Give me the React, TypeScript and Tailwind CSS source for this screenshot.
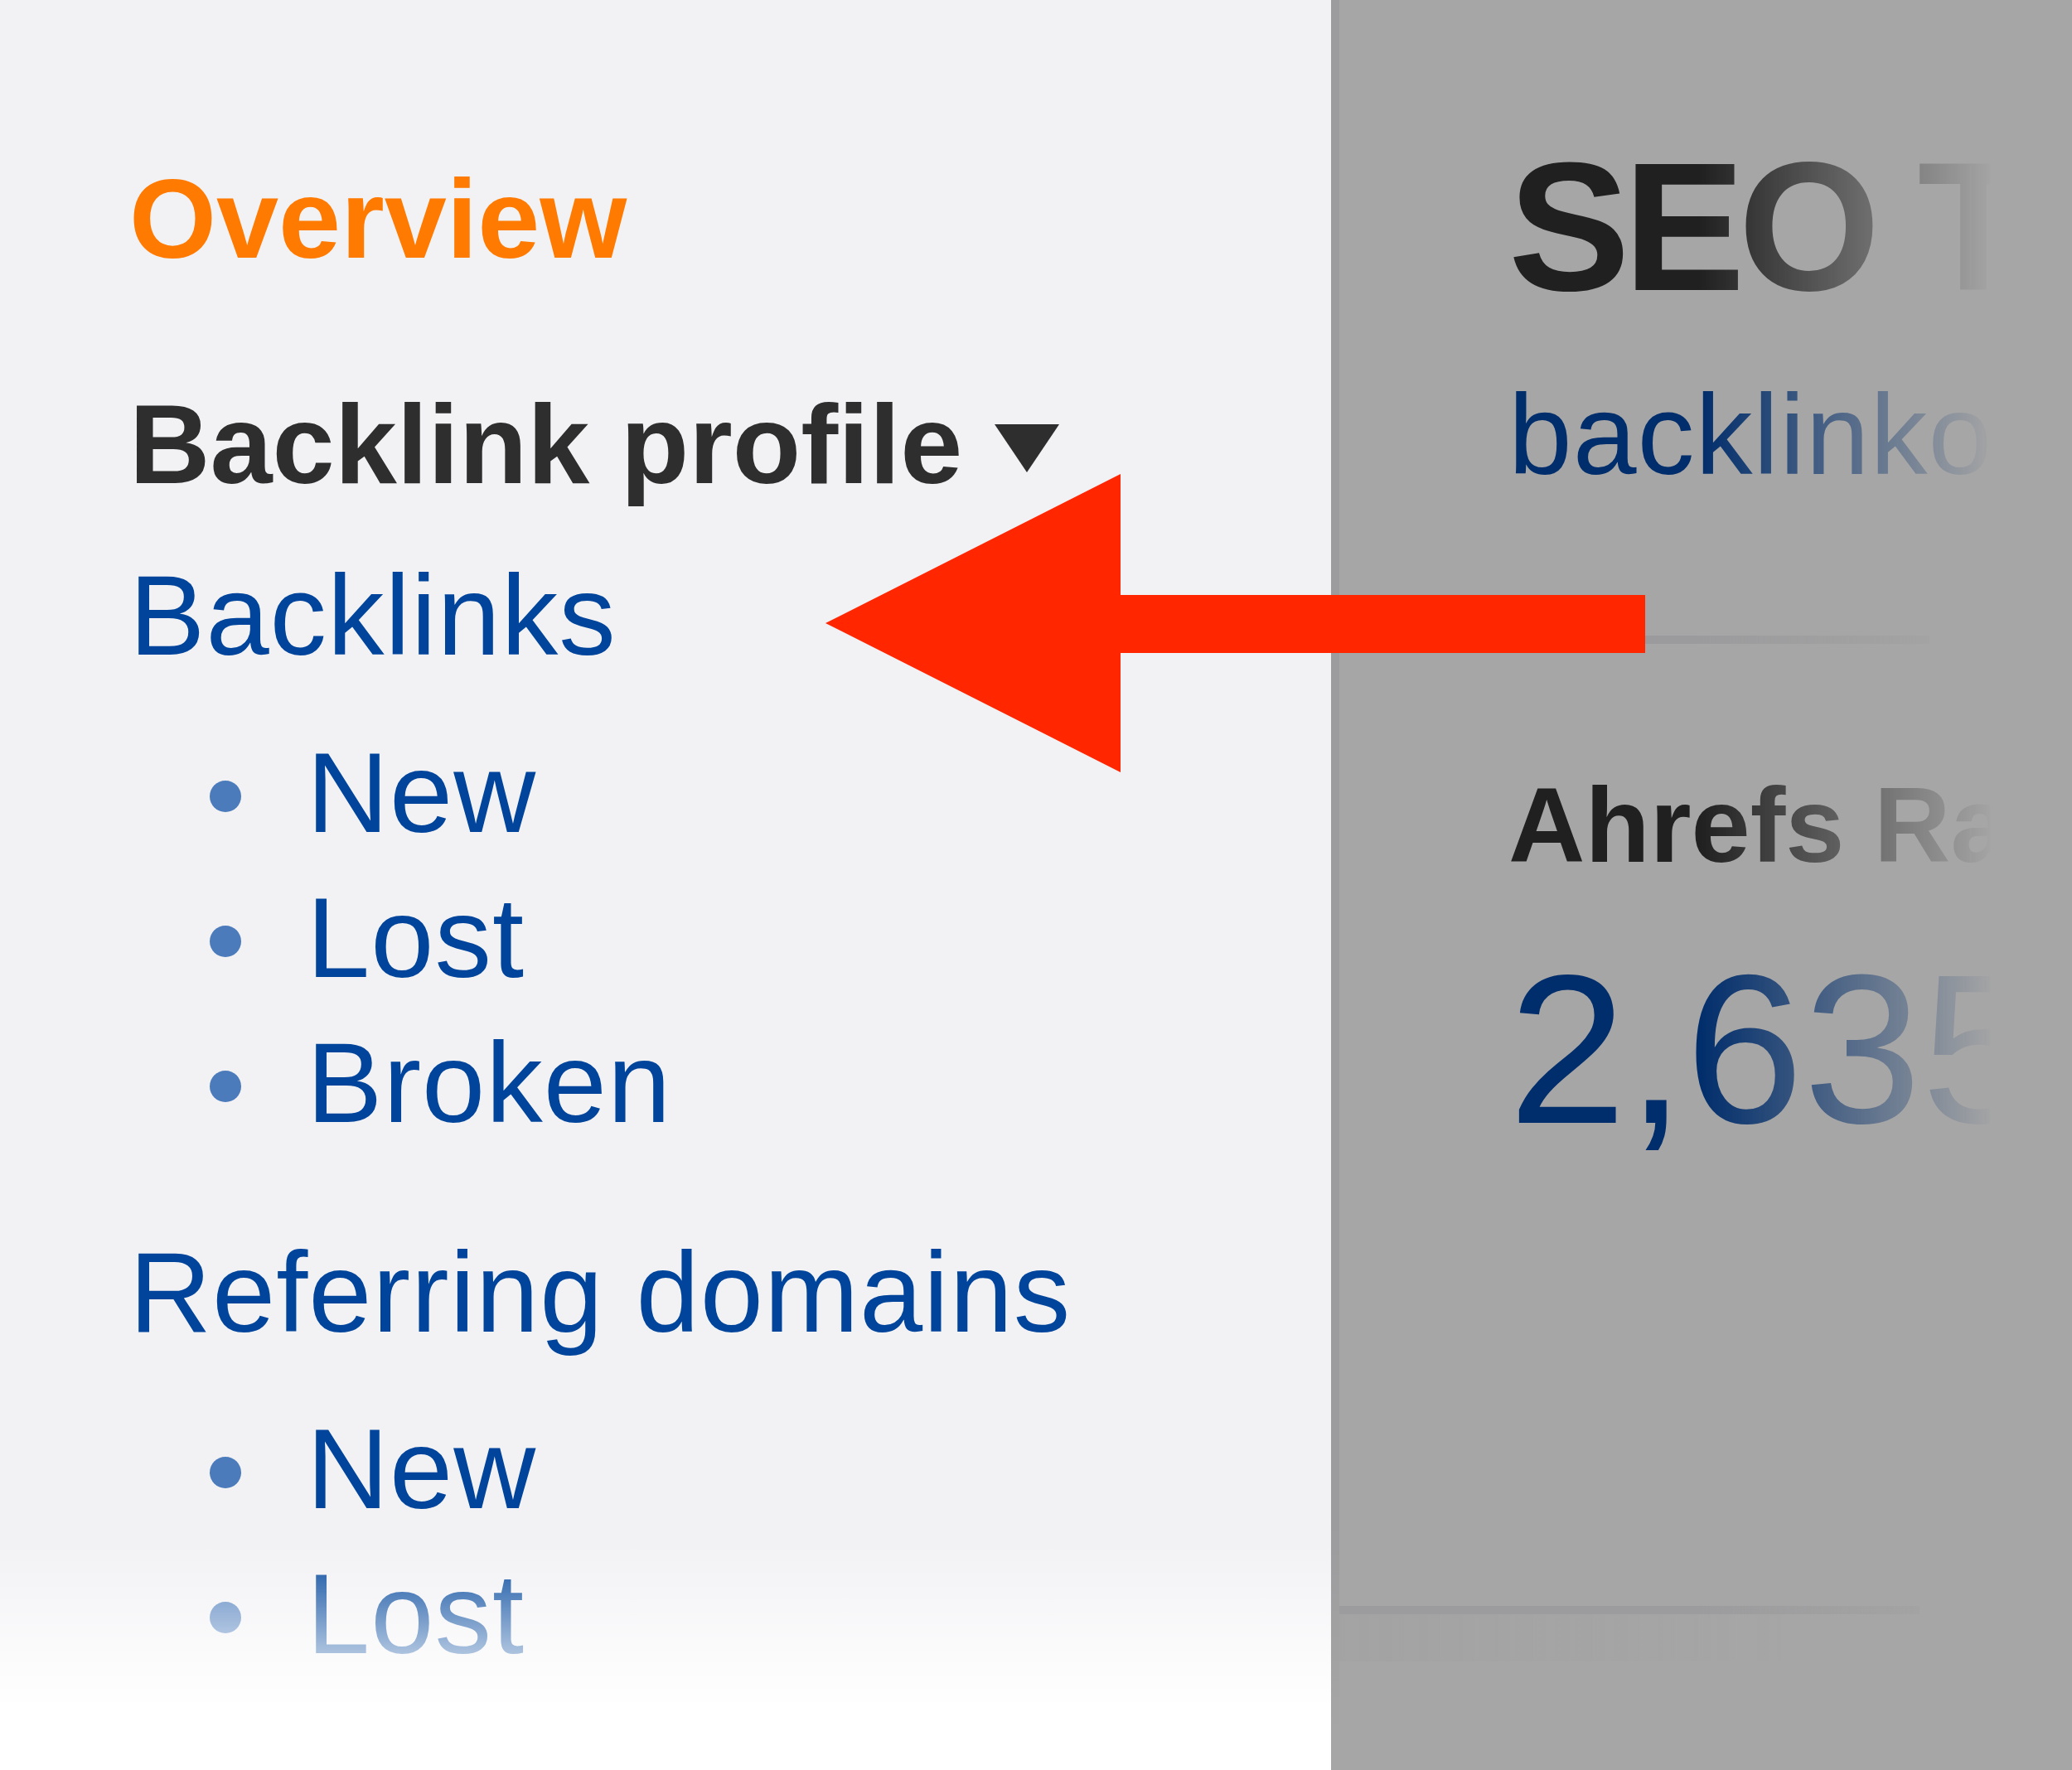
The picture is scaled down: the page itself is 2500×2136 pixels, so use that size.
import React from "react";

function Bullet({ label }: { label: string }) {
  return (
    <li className="flex items-start h-[135px]">
      <span className="mt-[53px] ml-[97px] w-[38px] h-[38px] rounded-full bg-[#4b7bbb] shrink-0" />
      <span className="ml-[79px] text-[137px] leading-[135px] tracking-[1px] text-[#00459b] whitespace-nowrap">{label}</span>
    </li>
  );
}

export default function App() {
  return (
    <div className="relative flex w-[2500px] h-[2136px] overflow-hidden font-['Liberation_Sans',Arial,sans-serif]">
      {/* Left sidebar */}
      <div className="relative w-[1606px] h-full bg-[#f2f2f5] pl-[156px] pt-[197px] shrink-0">
        <div className="text-[135px] leading-[135px] font-bold text-[#ff7a00] whitespace-nowrap">Overview</div>

        <div className="mt-[137px] flex items-start h-[135px]">
          <span className="text-[135px] leading-[135px] font-bold text-[#2e2e2e] whitespace-nowrap">Backlink profile</span>
          <svg className="ml-[39px] mt-[43px] shrink-0" width="78" height="58" viewBox="0 0 78 58">
            <polygon points="0,0 78,0 39,58" fill="#2e2e2e" />
          </svg>
        </div>

        <div className="mt-[71px] text-[137px] leading-[135px] tracking-[1px] text-[#00459b] whitespace-nowrap">Backlinks</div>
        <ul className="mt-[79px] flex flex-col gap-[40px]">
          <Bullet label="New" />
          <Bullet label="Lost" />
          <Bullet label="Broken" />
        </ul>

        <div className="mt-[118px] text-[137px] leading-[135px] tracking-[1px] text-[#00459b] whitespace-nowrap">Referring domains</div>
        <ul className="mt-[78px] flex flex-col gap-[40px]">
          <Bullet label="New" />
          <Bullet label="Lost" />
        </ul>

        {/* bottom white fade */}
        <div className="absolute left-0 right-0 top-[1860px] h-[276px] bg-[linear-gradient(to_bottom,rgba(255,255,255,0)_0px,rgba(255,255,255,1)_200px)] pointer-events-none" />
      </div>

      {/* divider strip */}
      <div className="w-[10px] h-full shrink-0 bg-[linear-gradient(to_bottom,#9c9c9e_0%,#9c9c9e_86%,#a6a6a6_98%)]" />

      {/* Right panel */}
      <div className="flex-1 h-full bg-[#a6a6a6]">
        <div className="w-[785px] h-full overflow-hidden flex flex-col [mask-image:linear-gradient(to_right,black_434px,transparent_790px)] [-webkit-mask-image:linear-gradient(to_right,black_434px,transparent_790px)]">
          <div className="pl-[204px] mt-[164px] text-[220px] leading-[220px] font-bold tracking-[-8px] text-[#202020] whitespace-nowrap">SEO Tools</div>
          <div className="pl-[204px] mt-[73px] text-[138px] leading-[135px] tracking-[1px] text-[#002d6b] whitespace-nowrap">backlinko.com</div>
          <div className="mt-[175px] h-[10px] w-[712px] bg-[#9b9b9d] shrink-0" />
          <div className="pl-[204px] mt-[155px] text-[128px] leading-[128px] font-bold text-[#202020] whitespace-nowrap">Ahrefs Rank</div>
          <div className="pl-[204px] mt-[78px] text-[256px] leading-[256px] text-[#002d6b] whitespace-nowrap">2,635</div>
          <div className="mt-[544px] h-[10px] w-[700px] bg-[#9c9c9e] shrink-0" />
          <div className="h-[57px] w-[540px] bg-[linear-gradient(to_right,rgba(150,150,152,0.15),rgba(150,150,152,0))] shrink-0" />
        </div>
      </div>

      {/* Red arrow */}
      <svg className="absolute left-0 top-0 pointer-events-none" width="2500" height="2136" viewBox="0 0 2500 2136">
        <polygon
          points="996,752 1352,572 1352,718 1985,718 1985,788 1352,788 1352,932"
          fill="#ff2600"
        />
      </svg>
    </div>
  );
}
